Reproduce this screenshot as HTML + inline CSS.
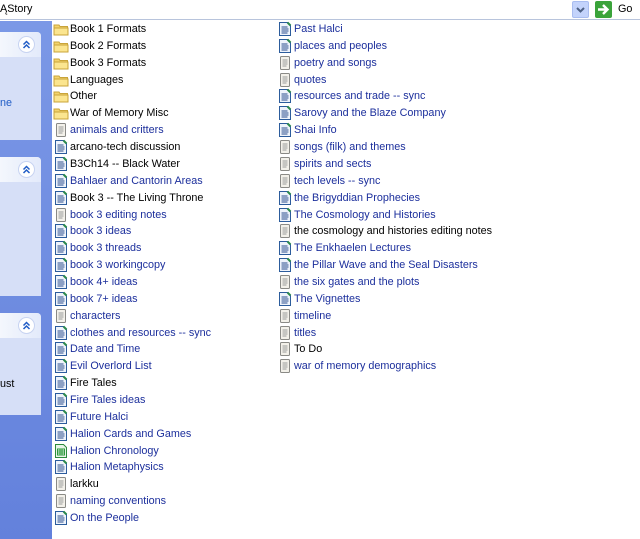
<!DOCTYPE html>
<html><head><style>
*{margin:0;padding:0;box-sizing:border-box}
body{width:640px;height:539px;overflow:hidden;background:#fff;font-family:"Liberation Sans",sans-serif;font-size:10.8px;position:relative}
#addr{position:absolute;left:0;top:0;width:640px;height:20px;background:#fff;border-bottom:1px solid #b8c4dc}
#addr .t{position:absolute;left:0;top:3px;color:#000}
#dd{position:absolute;left:572px;top:1px;width:17px;height:17px;background:#c3d3fb;border:1px solid #a9bdf0;border-radius:2px}
#go{position:absolute;left:595px;top:1px;width:17px;height:17px;background:#3aa33a;border-radius:2px}
#gotext{position:absolute;left:618px;top:3px}
#side{position:absolute;left:0;top:21px;width:52px;height:518px;background:linear-gradient(#7b98e6,#6381dc)}
.panel{position:absolute;left:0;width:41px;background:#d6dff7;border-radius:0 4px 0 0;overflow:hidden}
.panel .h{height:25px;background:linear-gradient(90deg,#f4f7fd,#e3eafb)}
.chev{position:absolute;left:18px;top:4px;width:17px;height:17px;border-radius:50%;background:#fff;border:1px solid #c7d3f1}
.row{position:absolute;height:16px;white-space:nowrap;line-height:16px}
.row svg{position:absolute;left:0;top:0}
.row span{position:absolute;left:17px;top:0}
.b{color:#1c2f9c}.k{color:#000}
</style></head><body>
<div id="addr"><div class="t">ĄStory</div>
<div id="dd"><svg width="15" height="15"><path d="M4 6l3.5 3.5L11 6" stroke="#4d6185" stroke-width="2" fill="none"/></svg></div>
<div id="go"><svg width="17" height="17"><path d="M3 8.5h9M8 4l4.5 4.5L8 13" stroke="#fff" stroke-width="2.4" fill="none"/></svg></div>
<div id="gotext">Go</div></div>
<div id="side">
<div class="panel" style="top:11px;height:108px"><div class="h"></div><div class="chev"><svg width="15" height="15"><path d="M4.5 7.5l3-3 3 3M4.5 11l3-3 3 3" stroke="#215dc6" stroke-width="1.5" fill="none"/></svg></div><div style="position:absolute;left:0;top:65px;color:#215dc6">ne</div></div>
<div class="panel" style="top:136px;height:139px"><div class="h"></div><div class="chev"><svg width="15" height="15"><path d="M4.5 7.5l3-3 3 3M4.5 11l3-3 3 3" stroke="#215dc6" stroke-width="1.5" fill="none"/></svg></div></div>
<div class="panel" style="top:292px;height:102px"><div class="h"></div><div class="chev"><svg width="15" height="15"><path d="M4.5 7.5l3-3 3 3M4.5 11l3-3 3 3" stroke="#215dc6" stroke-width="1.5" fill="none"/></svg></div><div style="position:absolute;left:0;top:65px;color:#000">ust</div></div>
</div>
<div id="list"></div>
<script>
var F='<svg width="16" height="16"><path d="M1 4h5l1 1.5h7.5v8.5H1z" fill="#f3d36d" stroke="#c9a43a"/><path d="M1 7h14v7H1z" fill="#fbe58f" stroke="#c9a43a"/></svg>';
var D='<svg width="16" height="16"><path d="M2.5 1.5h8l3 3v10h-11z" fill="#eef3fb" stroke="#2c5c9c"/><path d="M10.5 1.5l3 3" stroke="#2c8a4c" stroke-width="2"/><path d="M4.5 6h6M4.5 8h7M4.5 10h7M4.5 12h6" stroke="#2b4d8c"/></svg>';
var T='<svg width="16" height="16"><rect x="3.5" y="1.5" width="9" height="13" rx="1" fill="#f3f1ea" stroke="#8a8a86"/><path d="M5.5 5h5M5.5 7h5M5.5 9h5M5.5 11h4" stroke="#9a9a9a"/></svg>';
var X='<svg width="16" height="16"><path d="M2.5 1.5h8l3 3v10h-11z" fill="#e8f4e8" stroke="#2c8a3c"/><rect x="4.5" y="6" width="7" height="6" fill="#fff" stroke="#2c9a3c"/><path d="M4.5 8h7M4.5 10h7M7 6v6M9 6v6" stroke="#2c9a3c"/></svg>';
var c1=[[F,'k','Book 1 Formats'],[F,'k','Book 2 Formats'],[F,'k','Book 3 Formats'],[F,'k','Languages'],[F,'k','Other'],[F,'k','War of Memory Misc'],[T,'b','animals and critters'],[D,'k','arcano-tech discussion'],[D,'k','B3Ch14 -- Black Water'],[D,'b','Bahlaer and Cantorin Areas'],[D,'k','Book 3 -- The Living Throne'],[T,'b','book 3 editing notes'],[D,'b','book 3 ideas'],[D,'b','book 3 threads'],[D,'b','book 3 workingcopy'],[D,'b','book 4+ ideas'],[D,'b','book 7+ ideas'],[T,'b','characters'],[D,'b','clothes and resources -- sync'],[D,'b','Date and Time'],[D,'b','Evil Overlord List'],[D,'k','Fire Tales'],[D,'b','Fire Tales ideas'],[D,'b','Future Halci'],[D,'b','Halion Cards and Games'],[X,'b','Halion Chronology'],[D,'b','Halion Metaphysics'],[T,'k','larkku'],[T,'b','naming conventions'],[D,'b','On the People']];
var c2=[[D,'b','Past Halci'],[D,'b','places and peoples'],[T,'b','poetry and songs'],[T,'b','quotes'],[D,'b','resources and trade -- sync'],[D,'b','Sarovy and the Blaze Company'],[D,'b','Shai Info'],[T,'b','songs (filk) and themes'],[T,'b','spirits and sects'],[T,'b','tech levels -- sync'],[D,'b','the Brigyddian Prophecies'],[D,'b','The Cosmology and Histories'],[T,'k','the cosmology and histories editing notes'],[D,'b','The Enkhaelen Lectures'],[D,'b','the Pillar Wave and the Seal Disasters'],[T,'b','the six gates and the plots'],[D,'b','The Vignettes'],[T,'b','timeline'],[T,'b','titles'],[T,'k','To Do'],[T,'b','war of memory demographics']];
var h='';
function add(a,x){a.forEach(function(r,i){h+='<div class="row" style="left:'+x+'px;top:'+(21+i*16.86).toFixed(1)+'px">'+r[0]+'<span class="'+r[1]+'">'+r[2]+'</span></div>';});}
add(c1,53);add(c2,277);
document.getElementById('list').innerHTML=h;
</script>
</body></html>
